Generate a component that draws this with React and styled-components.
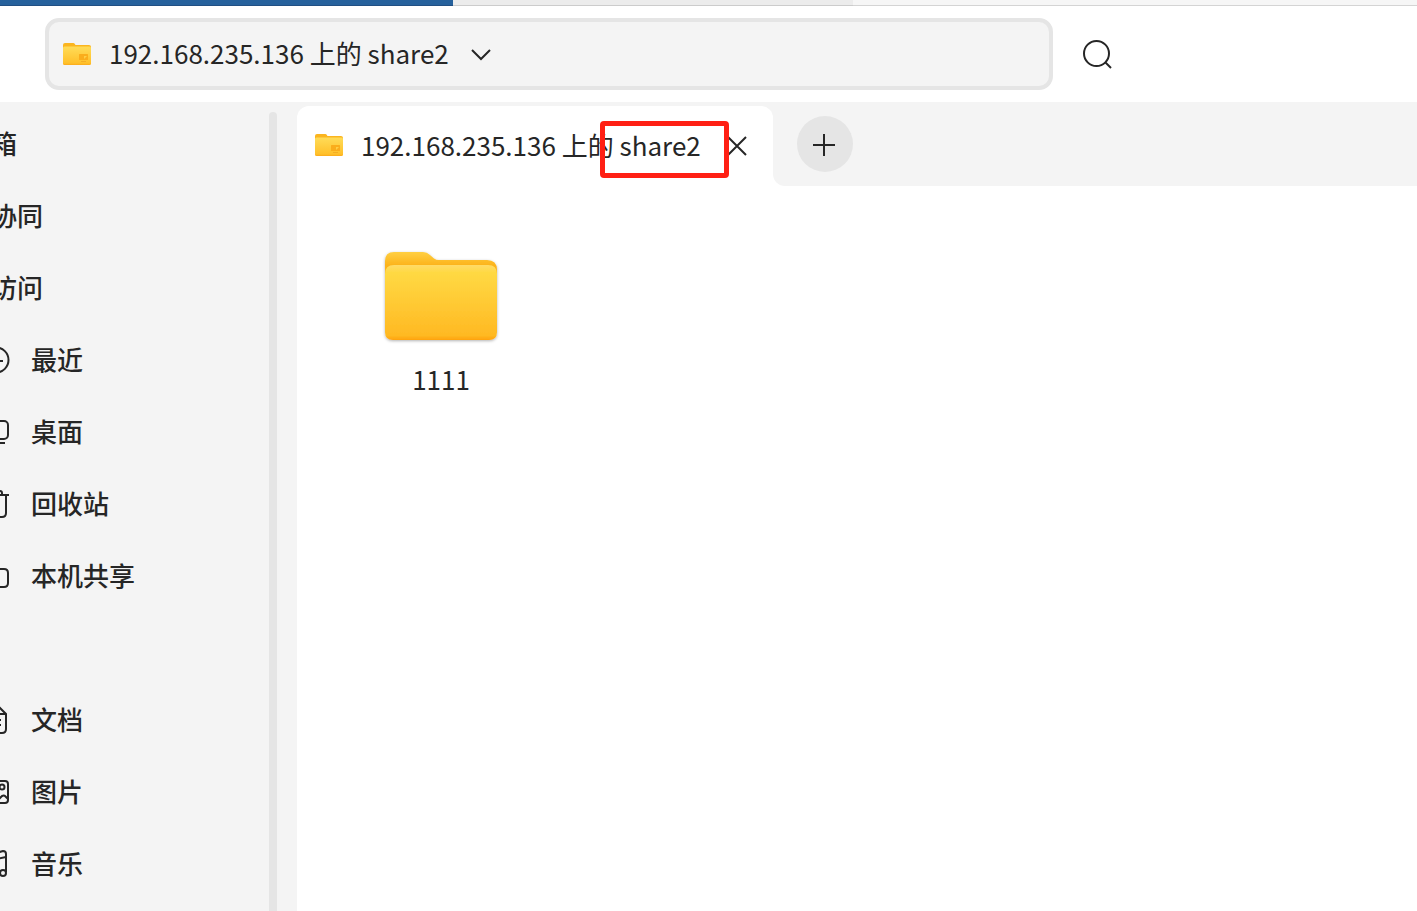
import React from "react";
import styled, { createGlobalStyle } from "styled-components";

const GlobalStyle = createGlobalStyle`
    * {
        box-sizing: border-box;
    }

    body {
        margin: 0;
        overflow-x: hidden;
        background: #ffffff;
        color: #262626;
        font-family: "Noto Sans CJK SC", "Noto Sans", sans-serif;
        font-size: 26px;
        line-height: 40px;
    }

    button {
        padding: 0;
        border: none;
        background: none;
        color: inherit;
        font: inherit;
        cursor: pointer;
    }

    svg {
        display: block;
        flex: none;
    }
`;

const Window = styled.div`
    min-height: 100vh;
    display: flex;
    flex-direction: column;
    overflow: hidden;
`;

const TopStrip = styled.div`
    display: flex;
    height: 6px;
`;

const StripPart = styled.div`
    flex: ${(props) => props.$grow} 1 0;
    background: ${(props) => props.$color};
    border-bottom: 1px solid ${(props) => props.$line};
`;

const Toolbar = styled.header`
    display: flex;
    align-items: center;
    height: 96px;
    padding-left: 45px;
`;

const AddressBar = styled.div`
    flex: 1;
    display: flex;
    align-items: center;
    height: 72px;
    padding: 0 14px;
    border: 4px solid #e5e5e5;
    border-radius: 14px;
    background: #f4f4f4;
`;

const PathButton = styled.button`
    display: flex;
    align-items: center;
    gap: 18px;
    white-space: nowrap;
`;

const Label = styled.span`
    padding-bottom: 2px;
`;

const Tools = styled.div`
    width: 364px;
    padding-left: 24px;
`;

const ToolButton = styled.button`
    display: flex;
    align-items: center;
    justify-content: center;
    width: ${(props) => props.$width || "40px"};
    height: 40px;
`;

const Body = styled.div`
    flex: 1;
    display: flex;
`;

const Sidebar = styled.nav`
    flex: none;
    display: flex;
    justify-content: space-between;
    width: 297px;
    padding: 6px 20px 0 0;
    background: #f4f4f4;
`;

const PlaceList = styled.ul`
    margin: 0 0 0 -18px;
    padding: 0;
    list-style: none;
`;

const Place = styled.li`
    display: flex;
    align-items: center;
    height: 72px;
`;

const PlaceLink = styled.a`
    display: flex;
    align-items: center;
    gap: 21px;
    padding-left: ${(props) => (props.$plain ? "9px" : "0")};
    color: inherit;
    font-weight: 500;
    text-decoration: none;
    white-space: nowrap;
`;

const ScrollThumb = styled.div`
    width: 8px;
    margin-top: 4px;
    border-radius: 4px 4px 0 0;
    background: #e5e5e5;
`;

const Main = styled.main`
    flex: 1;
    min-width: 0;
`;

const TabBar = styled.div`
    display: flex;
    height: 84px;
`;

const TabSlot = styled.div`
    display: flex;
    padding-top: 4px;
    background: #f4f4f4;
`;

const Tab = styled.div`
    display: flex;
    align-items: center;
    gap: 18px;
    padding: 0 18px 2px;
    border-radius: 12px 12px 0 0;
    background: #ffffff;
    white-space: nowrap;
`;

const Marked = styled.span`
    position: relative;

    &::after {
        content: "";
        position: absolute;
        z-index: 1;
        inset: -5px -28px -15px -20px;
        border: 5px solid #ff2014;
        border-radius: 4px;
    }
`;

const TabRest = styled.div`
    flex: 1;
    padding: 14px 24px;
    border-bottom-left-radius: 12px;
    background: #f4f4f4;
`;

const NewTabButton = styled.button`
    display: flex;
    align-items: center;
    justify-content: center;
    width: 56px;
    height: 56px;
    border-radius: 50%;
    background: #e5e5e5;
`;

const FileGrid = styled.div`
    display: flex;
    flex-wrap: wrap;
    padding: 60px 48px;
`;

const FileItem = styled.button`
    display: flex;
    flex-direction: column;
    align-items: center;
    gap: 13px;
    width: 192px;
`;

const SmallFolder = () => (
    <svg width="28" height="24" viewBox="0 0 28 24" aria-hidden="true">
        <defs>
            <linearGradient id="smallFront" x1="0" y1="0" x2="0" y2="1">
                <stop offset="0" stopColor="#ffdc58" />
                <stop offset="0.9" stopColor="#ffc02a" />
                <stop offset="1" stopColor="#fba919" />
            </linearGradient>
        </defs>
        <path d="M0 3Q0 1 2 1H10.500Q11.500 1 12.500 3H26Q28 3 28 5V12H0Z" fill="#fbb51f" />
        <rect y="4.500" width="28" height="18.500" rx="1.500" fill="url(#smallFront)" />
        <rect x="16" y="12" width="9" height="6" rx="0.500" fill="#faad1c" />
        <path d="M21 17V14H24Z" fill="#ffcf45" />
        <path d="M18 19.500H23" stroke="#f3ad25" />
    </svg>
);

const LargeFolder = () => (
    <svg width="120" height="100" viewBox="0 0 120 100" aria-hidden="true">
        <defs>
            <linearGradient id="folderBack" x1="0" y1="0" x2="0" y2="1">
                <stop offset="0" stopColor="#ffcf41" />
                <stop offset="0.25" stopColor="#fcb31b" />
                <stop offset="1" stopColor="#fcb31b" />
            </linearGradient>
            <linearGradient id="folderFront" x1="0" y1="0" x2="0" y2="1">
                <stop offset="0" stopColor="#ffdb68" />
                <stop offset="0.1" stopColor="#ffd943" />
                <stop offset="0.94" stopColor="#ffb923" />
                <stop offset="1" stopColor="#ffa20c" />
            </linearGradient>
            <filter id="folderShadow" x="-10%" y="-10%" width="120%" height="120%">
                <feDropShadow dx="0" dy="1" stdDeviation="1.500" floodOpacity="0.3" />
            </filter>
        </defs>
        <g filter="url(#folderShadow)">
            <path
                d="M4 15Q4 6 13 6H42Q46 6 49 9L53 12.500Q55 14 58 14H106Q116 14 116 24V60H4Z"
                fill="url(#folderBack)"
            />
            <path
                d="M4 28Q4 19 13 19H107Q116 19 116 28V86Q116 94 108 94H12Q4 94 4 86Z"
                fill="url(#folderFront)"
            />
        </g>
    </svg>
);

const Icon = ({ size = 28, children }) => (
    <svg
        width={size}
        height={size}
        viewBox={`0 0 ${size} ${size}`}
        fill="none"
        stroke="#262626"
        strokeWidth="2"
        aria-hidden="true"
    >
        {children}
    </svg>
);

const places = [
    { name: "箱" },
    { name: "协同" },
    { name: "访问" },
    {
        name: "最近",
        icon: (
            <>
                <circle cx="14" cy="14" r="12.500" />
                <path d="M14 6V15H21" />
            </>
        ),
    },
    {
        name: "桌面",
        icon: (
            <>
                <rect x="2" y="3" width="24" height="18" rx="4" />
                <path d="M5 25H23" />
            </>
        ),
    },
    {
        name: "回收站",
        icon: (
            <>
                <path d="M1 5H27M9 5V3Q9 1 11 1H18Q20 1 20 3V5" />
                <path d="M4 5V23Q4 27 8 27H20Q24 27 24 23V5" />
            </>
        ),
    },
    {
        name: "本机共享",
        icon: <path d="M2 21V7Q2 3 6 3H11L14 7H22Q26 7 26 11V21Q26 25 22 25H6Q2 25 2 21Z" />,
    },
    null,
    {
        name: "文档",
        icon: (
            <>
                <path d="M4 23V5Q4 1 8 1H17L24 8V23Q24 27 20 27H8Q4 27 4 23Z" />
                <path d="M17 1V8H24M9 14H19M9 19H19" />
            </>
        ),
    },
    {
        name: "图片",
        icon: (
            <>
                <rect x="2" y="3" width="24" height="22" rx="3" />
                <circle cx="20" cy="9" r="2.500" />
                <path d="M2 20L9 13L16 22L20 18Q22 17 23 18L26 21" />
            </>
        ),
    },
    {
        name: "音乐",
        icon: (
            <>
                <path d="M9 23V6Q9 4 11 4L21 1Q24 1 24 4V22M9 10L24 7" />
                <circle cx="6" cy="24" r="3" />
                <circle cx="21" cy="23" r="3" />
            </>
        ),
    },
];

const App = () => {
    return (
        <>
            <GlobalStyle />
            <Window>
                <TopStrip>
                    <StripPart $grow={453} $color="#26619c" $line="#214f83" />
                    <StripPart $grow={400} $color="#ececec" $line="#cccccc" />
                    <StripPart $grow={564} $color="#f6f6f6" $line="#d4d4d4" />
                </TopStrip>
                <Toolbar>
                    <AddressBar>
                        <PathButton type="button">
                            <SmallFolder />
                            <Label>192.168.235.136 上的 share2</Label>
                            <Icon size={28}>
                                <path d="M5 10L14 19L23 10" />
                            </Icon>
                        </PathButton>
                    </AddressBar>
                    <Tools>
                        <ToolButton type="button" aria-label="搜索">
                            <Icon size={32}>
                                <circle cx="15.500" cy="15.500" r="12.500" />
                                <path d="M24.500 24.500L30 30" />
                            </Icon>
                        </ToolButton>
                    </Tools>
                </Toolbar>
                <Body>
                    <Sidebar>
                        <PlaceList>
                            {places.map((place, index) => (
                                <Place key={index}>
                                    {place && (
                                        <PlaceLink href="#" $plain={!place.icon}>
                                            {place.icon && <Icon>{place.icon}</Icon>}
                                            <Label>{place.name}</Label>
                                        </PlaceLink>
                                    )}
                                </Place>
                            ))}
                        </PlaceList>
                        <ScrollThumb />
                    </Sidebar>
                    <Main>
                        <TabBar>
                            <TabSlot>
                                <Tab>
                                    <SmallFolder />
                                    <span>
                                        192.168.235.136 上的 <Marked>share2</Marked>
                                    </span>
                                    <ToolButton type="button" aria-label="关闭" $width="36px">
                                        <Icon size={24}>
                                            <path d="M3 4L21 22M21 4L3 22" />
                                        </Icon>
                                    </ToolButton>
                                </Tab>
                            </TabSlot>
                            <TabRest>
                                <NewTabButton type="button" aria-label="新建标签页">
                                    <Icon size={24}>
                                        <path d="M0 13H22M11 2V24" />
                                    </Icon>
                                </NewTabButton>
                            </TabRest>
                        </TabBar>
                        <FileGrid>
                            <FileItem type="button">
                                <LargeFolder />
                                <Label>1111</Label>
                            </FileItem>
                        </FileGrid>
                    </Main>
                </Body>
            </Window>
        </>
    );
};

export default App;
